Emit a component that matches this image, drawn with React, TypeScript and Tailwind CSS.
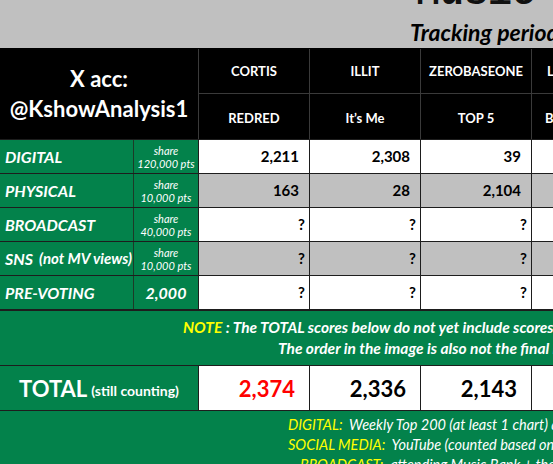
const font = { fontFamily: "Lato, 'Open Sans', sans-serif" };

const bands = [
  { name: "CORTIS", song: "REDRED" },
  { name: "ILLIT", song: "It’s Me" },
  { name: "ZEROBASEONE", song: "TOP 5" },
  { name: "LE SSERAFIM", song: "BACK TO LIFE" },
];

const rows = [
  { label: "DIGITAL", share: ["share", "120,000 pts"], values: ["2,211", "2,308", "39", ""], gray: false },
  { label: "PHYSICAL", share: ["share", "10,000 pts"], values: ["163", "28", "2,104", ""], gray: true },
  { label: "BROADCAST", share: ["share", "40,000 pts"], values: ["?", "?", "?", ""], gray: false },
  { label: "SNS", sub: "(not MV views)", share: ["share", "10,000 pts"], values: ["?", "?", "?", ""], gray: true },
  { label: "PRE-VOTING", pts: "2,000", values: ["?", "?", "?", ""], gray: false },
];

const totals = ["2,374", "2,336", "2,143", ""];

export default function App() {
  return (
    <div className="w-[553px] h-[464px] overflow-hidden bg-[#c0c0c0] flex flex-col" style={font}>
      {/* sheet title */}
      <div className="h-[48px] shrink-0 flex flex-col overflow-hidden">
        <div
          className="-mt-[29px] pl-[416px] whitespace-nowrap text-[40px] leading-[46px] font-bold text-[#111]"
          style={{ fontFamily: "'Liberation Mono', monospace" }}
        >
          Music Show Ranking
        </div>
        <div className="mt-[2px] pl-[410px] whitespace-nowrap text-[23px] leading-[26px] font-bold italic text-black">
          Tracking period
        </div>
      </div>

      {/* header */}
      <div className="grid grid-cols-[134px_65px_111px_111px_111px_111px] bg-black border-t border-black shrink-0">
        <div className="col-span-2 row-span-2 flex flex-col items-center justify-center text-white text-[22px] font-bold leading-[30px] border-r border-[#3a3a3a]">
          <span>X acc:</span>
          <span>@KshowAnalysis1</span>
        </div>
        {bands.map((b) => (
          <div key={b.name} className="h-[45px] flex items-center justify-center pt-[2px] text-white text-[13px] font-bold whitespace-nowrap border-r border-b border-[#3a3a3a]">
            {b.name}
          </div>
        ))}
        {bands.map((b) => (
          <div key={b.song} className="h-[45px] flex items-center justify-center pt-1 text-white text-[13px] font-bold whitespace-nowrap border-r border-[#3a3a3a]">
            {b.song}
          </div>
        ))}
      </div>

      {/* category rows */}
      {rows.map((r) => (
        <div key={r.label} className="grid grid-cols-[134px_65px_111px_111px_111px_111px] h-[34px] shrink-0 border-t border-[#1d1d1d]">
          <div className="bg-[#03824b] border-r border-[#1d3a28] flex items-center pl-[5px] text-white font-bold italic text-[16px] whitespace-nowrap">
            {r.label}
            {r.sub && <span className="ml-[6px] text-[15px]">{r.sub}</span>}
          </div>
          <div className="bg-[#03824b] border-r border-[#1d1d1d] flex flex-col items-center justify-center text-white italic">
            {r.share ? (
              <>
                <span className="text-[11px] leading-[13px]">{r.share[0]}</span>
                <span className="text-[11px] leading-[13px]">{r.share[1]}</span>
              </>
            ) : (
              <span className="text-[16px] font-bold">{r.pts}</span>
            )}
          </div>
          {r.values.map((v, i) => (
            <div
              key={i}
              className={`${r.gray ? "bg-[#c0c0c0]" : "bg-white"} border-r border-[#1d1d1d] flex items-center justify-end text-black font-bold text-[15px] ${v === "?" ? "pr-[4px]" : "pr-[10px]"}`}
            >
              {v}
            </div>
          ))}
        </div>
      ))}

      {/* note */}
      <div className="h-[57px] shrink-0 bg-[#03824b] border-t-2 border-b border-[#1d1d1d] flex flex-col justify-center text-white font-bold italic text-[15.5px] leading-[21px] whitespace-nowrap">
        <div className="pl-[183px]">
          <span className="text-[#ffff00]">NOTE</span> : The TOTAL scores below do not yet include scores for BROADCAST, SNS and PRE-VOTING.
        </div>
        <div className="pl-[278px]">The order in the image is also not the final ranking.</div>
      </div>

      {/* total */}
      <div className="grid grid-cols-[199px_111px_111px_111px_111px] h-[45px] shrink-0 border-b border-[#1d1d1d]">
        <div className="bg-[#03824b] border-r border-[#1d1d1d] flex items-center pl-[19px] text-white font-bold whitespace-nowrap">
          <span className="text-[22px]">TOTAL</span>
          <span className="ml-[4px] text-[14px] mt-[4px]">(still counting)</span>
        </div>
        {totals.map((t, i) => (
          <div
            key={i}
            className={`bg-white border-r border-[#1d1d1d] flex items-center justify-end pr-[14px] text-[22px] font-bold ${i === 0 ? "text-[#ff0000]" : "text-black"}`}
          >
            {t}
          </div>
        ))}
      </div>

      {/* legend */}
      <div className="flex-1 bg-[#03824b] pt-[4px] text-white italic text-[14.5px] leading-[20px] whitespace-nowrap">
        <div className="pl-[288px]">
          <span className="text-[#ffff00]">DIGITAL:</span>&nbsp; Weekly Top 200 (at least 1 chart) and daily streaming
        </div>
        <div className="pl-[288px]">
          <span className="text-[#ffff00]">SOCIAL MEDIA:</span>&nbsp; YouTube (counted based on official MV)
        </div>
        <div className="pl-[300px]">
          <span className="text-[#ffff00]">BROADCAST:</span>&nbsp; attending Music Bank + the show
        </div>
      </div>
    </div>
  );
}
